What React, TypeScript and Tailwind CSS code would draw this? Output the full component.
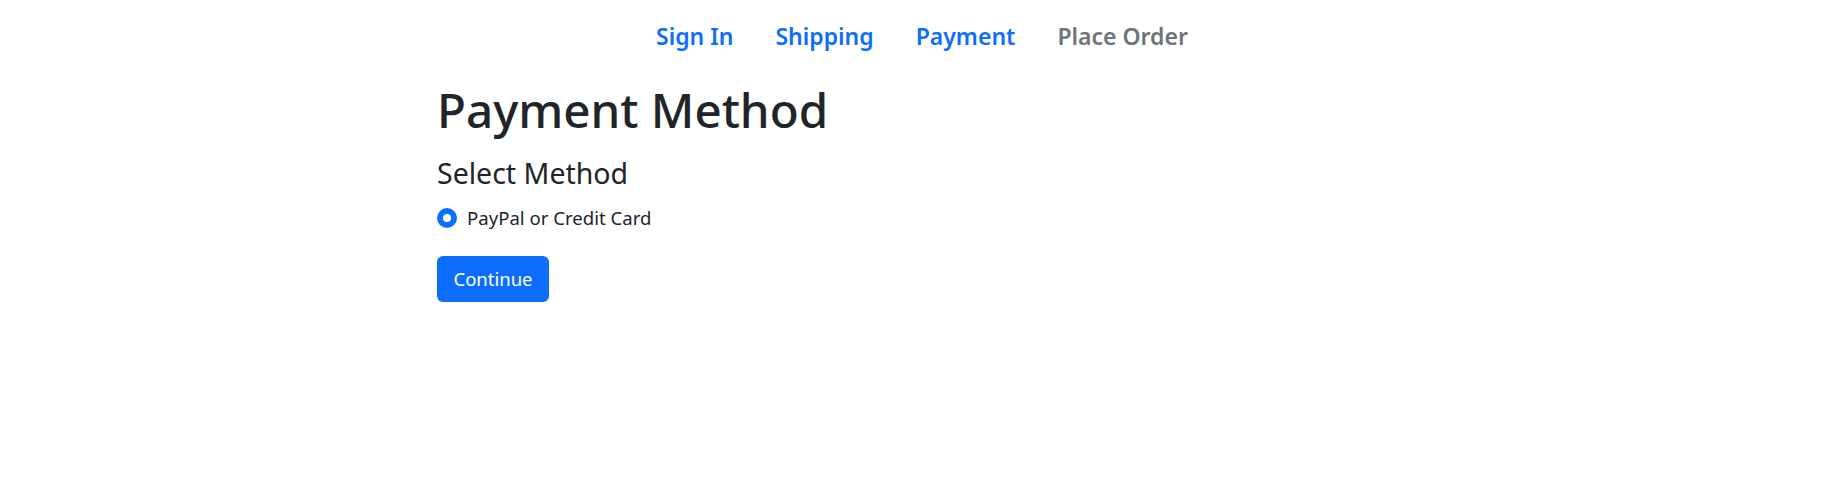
import { useState } from "react";

const steps = [
  { label: "Sign In", active: true },
  { label: "Shipping", active: true },
  { label: "Payment", active: true },
  { label: "Place Order", active: false },
];

export default function App() {
  const [method, setMethod] = useState("PayPal");

  return (
    <div className="min-h-screen bg-white font-['Noto_Sans',sans-serif] text-[#212529]">
      {/* Checkout steps */}
      <nav className="flex justify-center gap-[42px] pt-[16px]">
        {steps.map((s) => (
          <a
            key={s.label}
            href="#"
            className={`text-[23px] font-semibold leading-[40px] ${
              s.active ? "text-[#0d6efd]" : "text-[#6c757d] pointer-events-none"
            }`}
          >
            {s.label}
          </a>
        ))}
      </nav>

      {/* Form */}
      <div className="mx-auto w-[970px]">
        <h1 className="mt-[18px] text-[47.5px] font-medium leading-[72px]">Payment Method</h1>
        <form onSubmit={(e) => e.preventDefault()}>
          <legend className="mt-[8px] text-[28.5px] leading-[38px]">Select Method</legend>
          <label className="mt-[12px] flex items-center gap-[10px] text-[18.6px] leading-[28px] cursor-pointer">
            <input
              type="radio"
              name="paymentMethod"
              value="PayPal"
              checked={method === "PayPal"}
              onChange={(e) => setMethod(e.target.value)}
              className="sr-only"
            />
            <span className="flex h-[20px] w-[20px] items-center justify-center rounded-full bg-[#0d6efd]">
              <span className="h-[8px] w-[8px] rounded-full bg-white" />
            </span>
            PayPal or Credit Card
          </label>
          <button
            type="submit"
            className="mt-[24px] h-[46px] w-[112px] rounded-[6px] bg-[#0d6efd] text-[18.5px] text-white"
          >
            Continue
          </button>
        </form>
      </div>
    </div>
  );
}
